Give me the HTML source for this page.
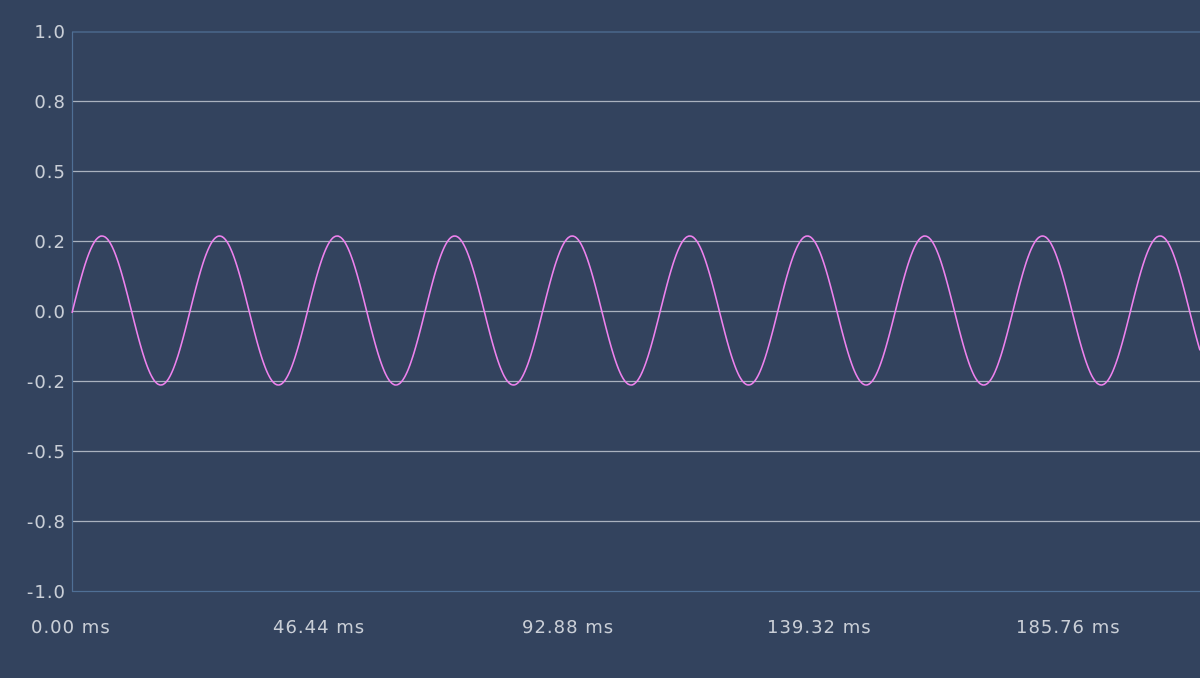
<!DOCTYPE html>
<html><head><meta charset="utf-8"><style>
html,body{margin:0;padding:0;background:#33435e;width:1200px;height:678px;overflow:hidden}
svg{display:block}
text{font-family:"DejaVu Sans",sans-serif;font-size:18px;letter-spacing:1px;fill:#c9ced6}
</style></head><body>
<svg width="1200" height="678" viewBox="0 0 1200 678" xmlns="http://www.w3.org/2000/svg">
<rect width="1200" height="678" fill="#33435e"/>
<g stroke="#aab2bf" stroke-width="1.2">
<line x1="72" y1="101.5" x2="1200" y2="101.5"/>
<line x1="72" y1="171.5" x2="1200" y2="171.5"/>
<line x1="72" y1="241.5" x2="1200" y2="241.5"/>
<line x1="72" y1="311.5" x2="1200" y2="311.5"/>
<line x1="72" y1="381.5" x2="1200" y2="381.5"/>
<line x1="72" y1="451.5" x2="1200" y2="451.5"/>
<line x1="72" y1="521.5" x2="1200" y2="521.5"/>
</g>
<g stroke="#4f6f95" stroke-width="1.2">
<line x1="72" y1="32" x2="1200" y2="32"/>
<line x1="72" y1="591.5" x2="1200" y2="591.5"/>
<line x1="72.5" y1="32" x2="72.5" y2="592"/>
</g>
<g text-anchor="end">
<text x="66" y="38">1.0</text>
<text x="66" y="108">0.8</text>
<text x="66" y="178">0.5</text>
<text x="66" y="248">0.2</text>
<text x="66" y="318">0.0</text>
<text x="66" y="388">-0.2</text>
<text x="66" y="458">-0.5</text>
<text x="66" y="528">-0.8</text>
<text x="66" y="598">-1.0</text>
</g>
<text x="31" y="633">0.00 ms</text>
<text x="273" y="633">46.44 ms</text>
<text x="522" y="633">92.88 ms</text>
<text x="767" y="633">139.32 ms</text>
<text x="1016" y="633">185.76 ms</text>
<polyline id="w" fill="none" stroke="#ee82ee" stroke-width="1.6" points=""/>
</svg>
<script>
var p=[],P=117.56,x0=72.6,c=310.5,A=74.5;
for(var x=72;x<=1200;x+=1){p.push(x+","+(c-A*Math.sin(2*Math.PI*(x-x0)/P)).toFixed(2));}
document.getElementById("w").setAttribute("points",p.join(" "));
</script>
</body></html>
